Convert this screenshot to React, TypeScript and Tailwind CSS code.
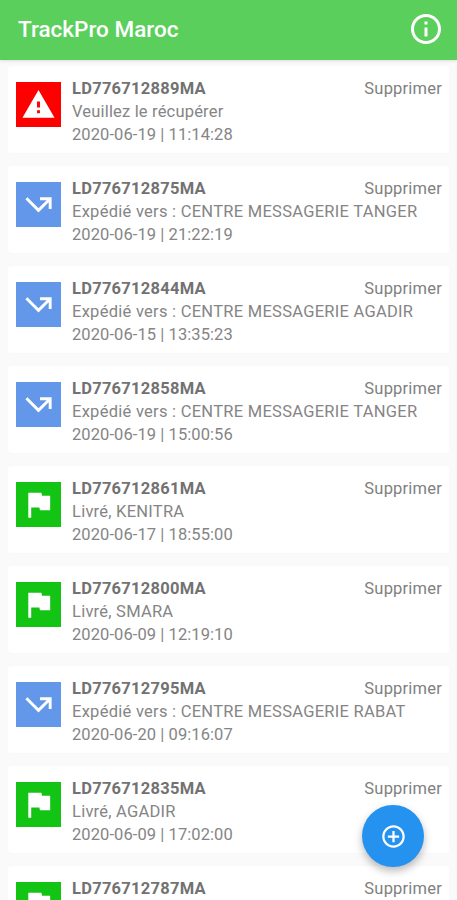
import { MdAddCircleOutline, MdCallMissedOutgoing, MdFlag, MdInfoOutline, MdWarning } from "react-icons/md";

type Status = "pickup" | "shipped" | "delivered";

interface Parcel {
  code: string;
  status: Status;
  label?: string;
  date?: string;
}

const parcels: Parcel[] = [
  { code: "LD776712889MA", status: "pickup", label: "Veuillez le récupérer", date: "2020-06-19 | 11:14:28" },
  { code: "LD776712875MA", status: "shipped", label: "Expédié vers : CENTRE MESSAGERIE TANGER", date: "2020-06-19 | 21:22:19" },
  { code: "LD776712844MA", status: "shipped", label: "Expédié vers : CENTRE MESSAGERIE AGADIR", date: "2020-06-15 | 13:35:23" },
  { code: "LD776712858MA", status: "shipped", label: "Expédié vers : CENTRE MESSAGERIE TANGER", date: "2020-06-19 | 15:00:56" },
  { code: "LD776712861MA", status: "delivered", label: "Livré, KENITRA", date: "2020-06-17 | 18:55:00" },
  { code: "LD776712800MA", status: "delivered", label: "Livré, SMARA", date: "2020-06-09 | 12:19:10" },
  { code: "LD776712795MA", status: "shipped", label: "Expédié vers : CENTRE MESSAGERIE RABAT", date: "2020-06-20 | 09:16:07" },
  { code: "LD776712835MA", status: "delivered", label: "Livré, AGADIR", date: "2020-06-09 | 17:02:00" },
  { code: "LD776712787MA", status: "delivered" },
];

const statusStyles = {
  pickup: { icon: MdWarning, color: "bg-[#fe0000]", tracking: "tracking-[0.18px]" },
  shipped: { icon: MdCallMissedOutgoing, color: "bg-[#6297ea]", tracking: "tracking-[0.27px]" },
  delivered: { icon: MdFlag, color: "bg-[#14c414]", tracking: "tracking-[0.24px]" },
};

function ParcelCard({ parcel }: { parcel: Parcel }) {
  const { icon: Icon, color, tracking } = statusStyles[parcel.status];

  return (
    <li className="flex h-[87px] shrink-0 rounded-sm bg-white px-2 pt-[11px] shadow-[0_0_2px_rgba(0,0,0,0.02)]">
      <div className={`mt-[5px] flex size-[45px] shrink-0 items-center justify-center text-white ${color}`}>
        <Icon size={35} />
      </div>
      <div className="ml-[11px] grow whitespace-nowrap text-[16.5px] leading-[23px] text-[#858585]">
        <div className="flex justify-between">
          <span className="font-bold tracking-[0.26px] text-[#727272]">{parcel.code}</span>
          <button className="-mr-px tracking-[0.2px] text-[#808080]">Supprimer</button>
        </div>
        {parcel.label && <p className={tracking}>{parcel.label}</p>}
        {parcel.date && <p className="tracking-[0.08px]">{parcel.date}</p>}
      </div>
    </li>
  );
}

export default function App() {
  return (
    <div className="relative flex h-screen flex-col overflow-hidden bg-[#fafafa] font-['Roboto',sans-serif]">
      <header className="z-10 flex h-[60px] shrink-0 items-center justify-between bg-[#5acf5c] pr-[13px] pl-[18px] text-white shadow-[0_1px_3px_rgba(0,0,0,0.12)]">
        <h1 className="text-[22.5px] font-medium">TrackPro Maroc</h1>
        <button aria-label="Informations" className="-mt-[3px]">
          <MdInfoOutline size={36} />
        </button>
      </header>

      <ul className="flex min-h-0 grow flex-col gap-[13px] overflow-hidden px-2 pt-[6px]">
        {parcels.map((parcel) => (
          <ParcelCard key={parcel.code} parcel={parcel} />
        ))}
      </ul>

      {/* Add button floats over the list */}
      <button
        aria-label="Ajouter"
        className="absolute right-[33px] bottom-[33px] flex size-[62px] items-center justify-center rounded-full bg-[#2592ef] text-white shadow-[0_4px_8px_rgba(0,0,0,0.28)]"
      >
        <MdAddCircleOutline size={27} />
      </button>
    </div>
  );
}
